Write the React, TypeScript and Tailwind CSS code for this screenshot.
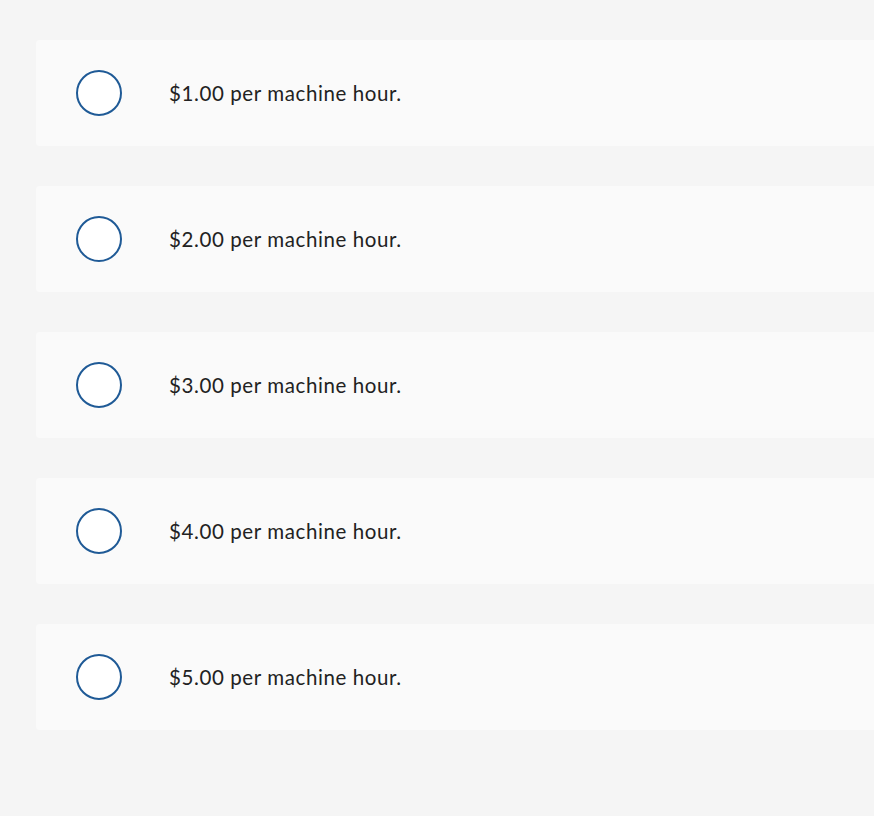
const options = [
  '$1.00 per machine hour.',
  '$2.00 per machine hour.',
  '$3.00 per machine hour.',
  '$4.00 per machine hour.',
  '$5.00 per machine hour.',
];

export default function App() {
  return (
    <div className="min-h-[816px] bg-[#f5f5f5] overflow-hidden pt-10 pl-9" style={{ fontFamily: 'Lato, "Open Sans", sans-serif' }}>
      <div className="flex flex-col gap-10">
        {options.map((label) => (
          <label
            key={label}
            className="-mr-4 flex h-[106px] items-center rounded bg-[#fafafa] cursor-pointer"
          >
            <span className="ml-10 h-[46px] w-[46px] shrink-0 rounded-full border-2 border-[#1f5a96] bg-white" />
            <span className="ml-[47px] text-[20.5px] text-[#222222] tracking-[0.6px]">{label}</span>
          </label>
        ))}
      </div>
    </div>
  );
}
